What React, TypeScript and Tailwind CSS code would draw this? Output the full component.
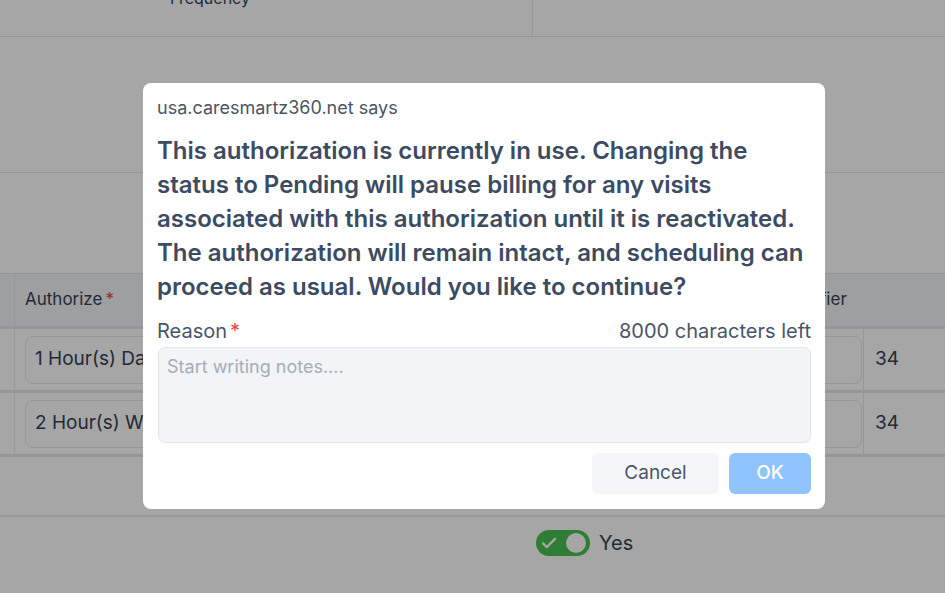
import React from 'react';

const font = { fontFamily: 'Inter, "Noto Sans", sans-serif' };

const Toggle: React.FC = () => (
  <div className="flex items-center gap-[9px]">
    <div className="w-[54px] h-[26px] rounded-full bg-[#46c052] flex items-center justify-between px-[4px]">
      <svg width="18" height="18" viewBox="0 0 24 24" fill="none" stroke="white" strokeWidth="3" strokeLinecap="round" strokeLinejoin="round">
        <path d="M4 12.5l5 5L20 6.5" />
      </svg>
      <div className="w-[20px] h-[20px] rounded-full bg-white" />
    </div>
    <span className="text-[20px] text-[#334155]">Yes</span>
  </div>
);

const RowInput: React.FC<{ label: string }> = ({ label }) => (
  <div className="h-[64px] border-b-[3px] border-[#e5e7eb] flex">
    <div className="w-[15px] border-r border-[#e5e7eb]" />
    <div className="flex-1 flex items-center pl-[10px]">
      <div className="w-[837px] h-[48px] rounded-[8px] border border-[#e5e7eb] flex items-center px-[9px] text-[19px] text-[#334155]">
        {label}
      </div>
    </div>
    <div className="w-[82px] border-l border-[#e5e7eb] flex items-center pl-[11px] text-[19px] text-[#334155]">34</div>
  </div>
);

const BackgroundPage: React.FC = () => (
  <div className="w-full h-full bg-white flex flex-col">
    <div className="h-[37px] border-b border-[#e5e7eb] flex">
      <div className="w-[533px] border-r border-[#e5e7eb] pl-[170px] -mt-[14px] text-[16px] text-[#334155]">Frequency</div>
      <div className="flex-1" />
    </div>
    <div className="h-[136px] border-b border-[#e5e7eb]" />
    <div className="h-[100px]" />
    <div className="h-[56px] bg-[#f3f4f6] border-t border-b-[3px] border-[#e5e7eb] flex">
      <div className="w-[15px] border-r border-[#e5e7eb]" />
      <div className="flex-1 flex items-center pl-[10px] text-[17px] text-[#334155]">
        Authorize<span className="text-[#ef4444] ml-[3px]">*</span>
      </div>
      <div className="w-[165px] flex items-center text-[17px] text-[#334155]">Modifier</div>
    </div>
    <RowInput label="1 Hour(s) Daily" />
    <RowInput label="2 Hour(s) Weekly" />
    <div className="h-[60px] border-b-[2px] border-[#e5e7eb]" />
    <div className="pt-[11px] pl-[536px]">
      <Toggle />
    </div>
  </div>
);

export default function App() {
  return (
    <div className="relative w-[945px] h-[593px] overflow-hidden" style={font}>
      <BackgroundPage />
      <div className="absolute inset-0 bg-black/35">
        <div className="absolute left-[143px] top-[83px] w-[682px] bg-white rounded-[8px] pt-[13px] px-[14px] pb-[15px] flex flex-col">
          <div className="text-[18px] leading-[24px] text-[#4b5563]">usa.caresmartz360.net says</div>
          <p className="mt-[14px] text-[24px] leading-[34px] font-semibold text-[#3c4b61]">
            This authorization is currently in use. Changing the status to Pending will pause billing for any visits
            associated with this authorization until it is reactivated. The authorization will remain intact, and
            scheduling can proceed as usual. Would you like to continue?
          </p>
          <div className="mt-[15px] flex items-center justify-between text-[20px] leading-[24px] text-[#475569]">
            <span>
              Reason<span className="text-[#ef4444] ml-[3px]">*</span>
            </span>
            <span>8000 characters left</span>
          </div>
          <textarea
            className="mt-[4px] ml-[1px] h-[96px] resize-none rounded-[7px] border border-[#e2e5ea] bg-[#f3f4f6] px-[8px] py-[7px] text-[18px] leading-[24px] text-[#334155] placeholder:text-[#a3adbc] outline-none"
            placeholder="Start writing notes...."
          />
          <div className="mt-[10px] flex justify-end gap-[10px]">
            <button className="w-[127px] h-[41px] rounded-[6px] bg-[#f5f6f7] text-[19px] text-[#4a5568]">Cancel</button>
            <button className="w-[82px] h-[41px] rounded-[6px] bg-[#90c4fd] text-[19px] font-medium text-white">OK</button>
          </div>
        </div>
      </div>
    </div>
  );
}
